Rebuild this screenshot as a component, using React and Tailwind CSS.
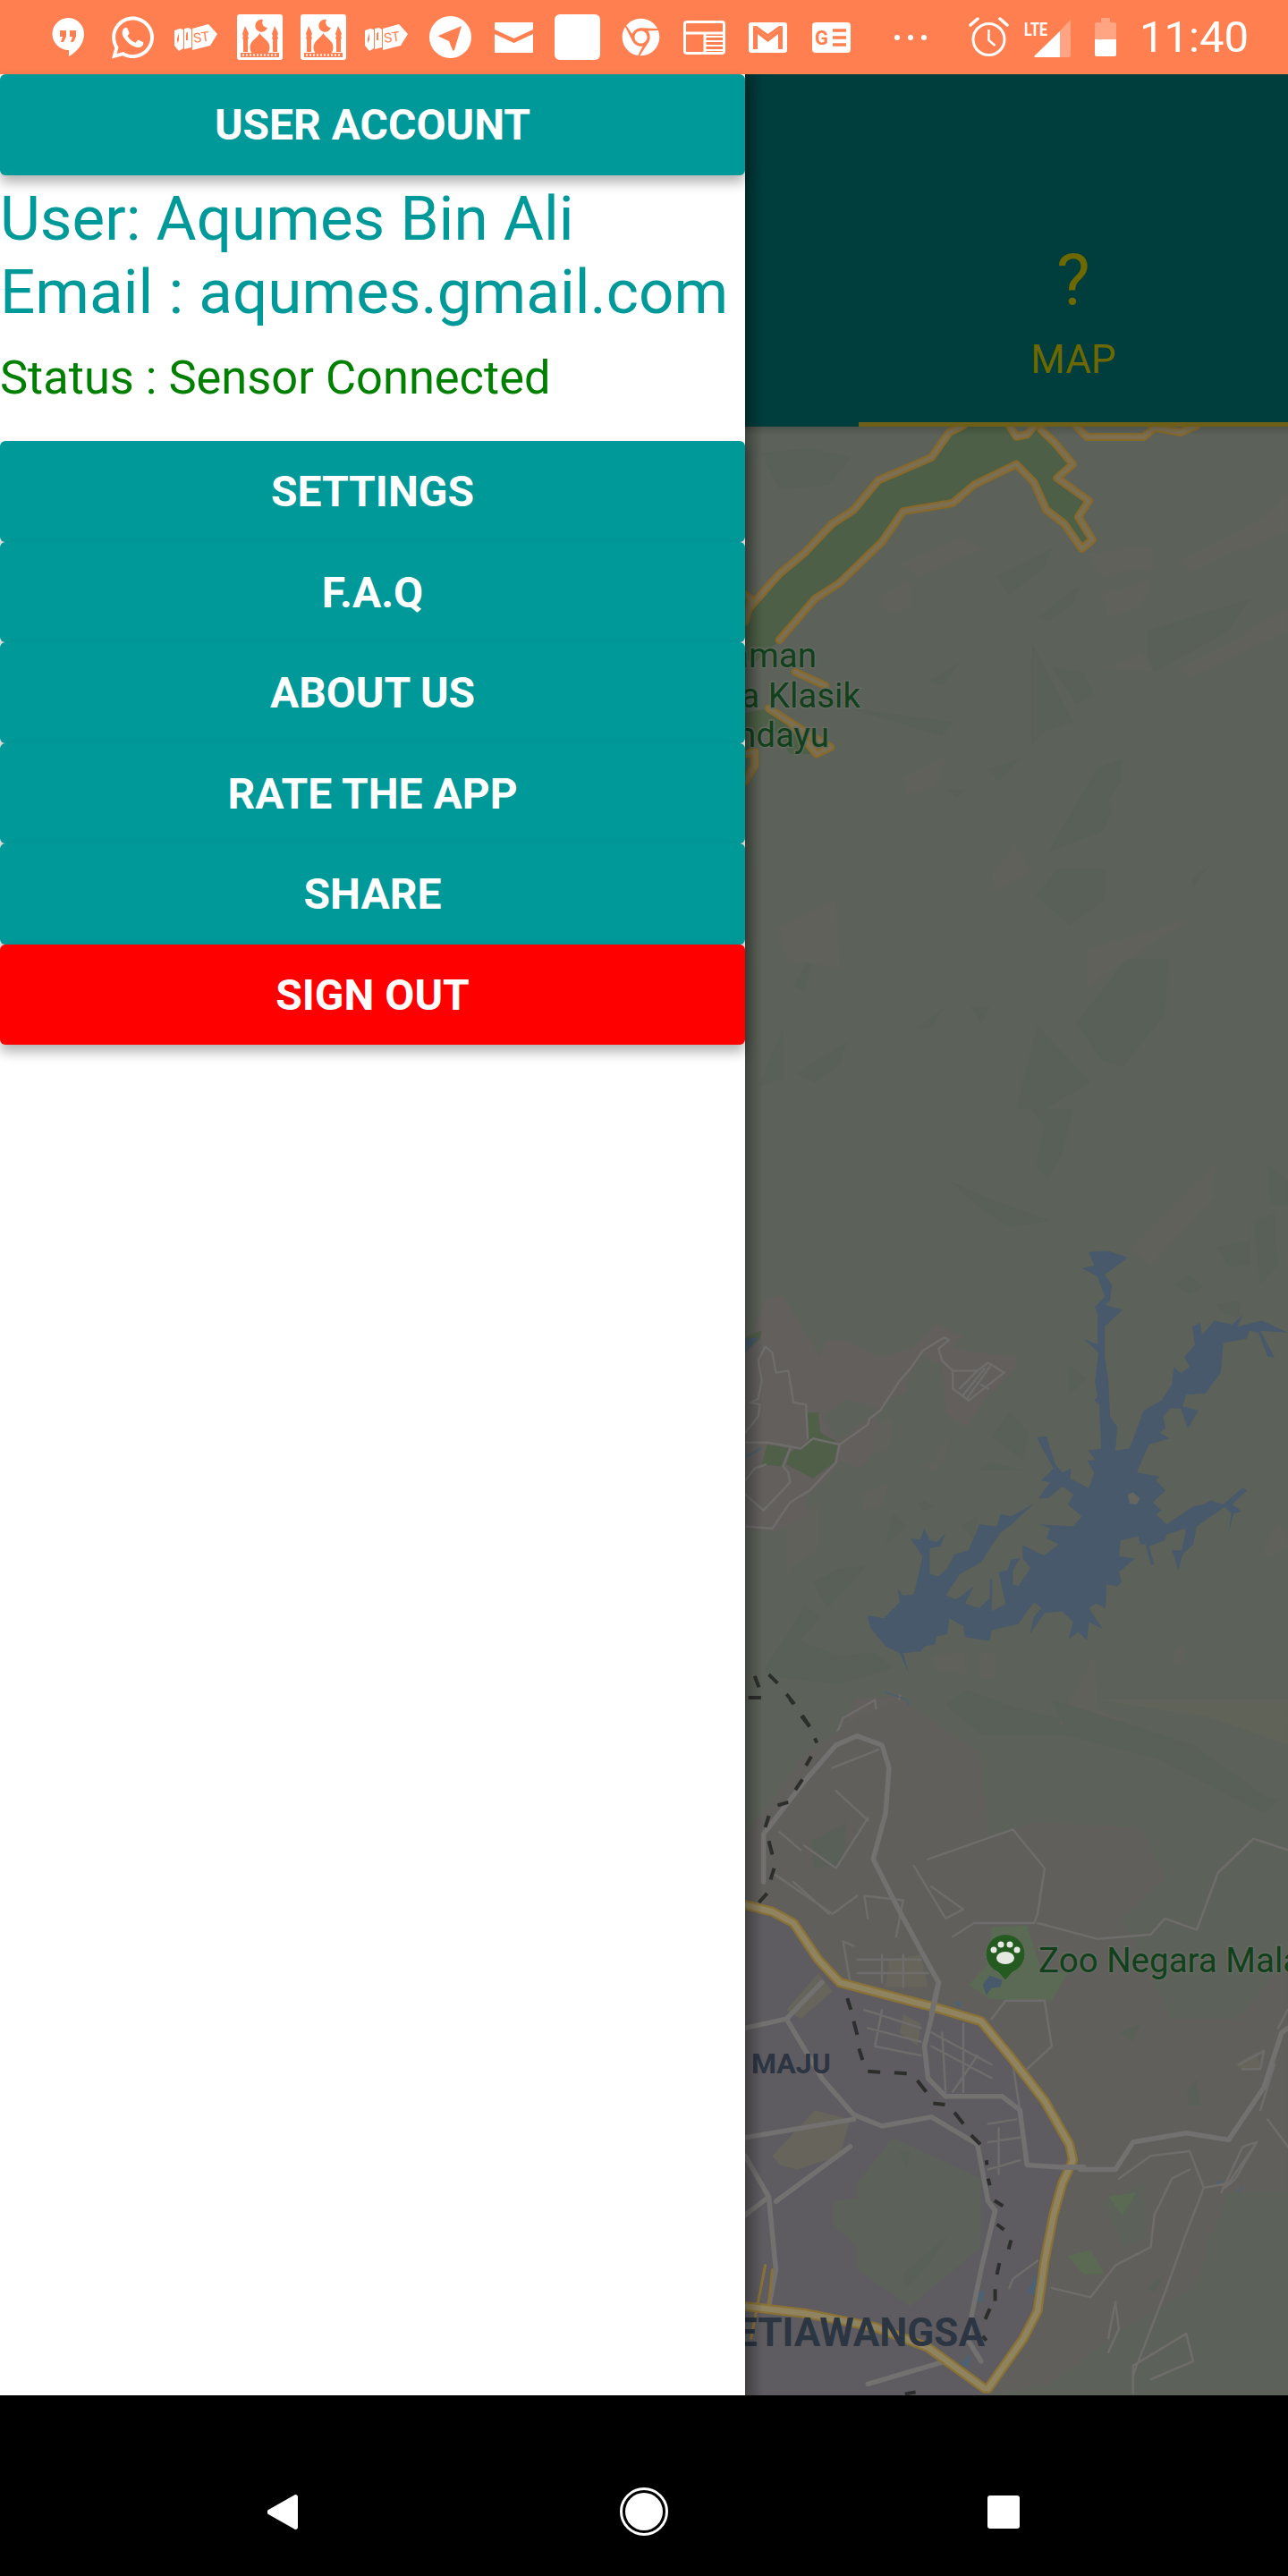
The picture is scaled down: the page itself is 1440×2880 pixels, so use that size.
import React from "react";
import { FaWhatsapp, FaChrome } from "react-icons/fa";

const CORAL = "#FF7F50";

function Hangouts() {
  return (
    <svg width="36" height="43" viewBox="0 0 36 43" className="shrink-0">
      <path d="M18 0a18 18 0 0 1 18 18c0 11-8 20-17 25v-7A18 18 0 0 1 18 0z" fill="#fff" />
      <path d="M9 14h7v7l-3 6h-3l2-6H9zM20 14h7v7l-3 6h-3l2-6h-3z" fill={CORAL} />
    </svg>
  );
}

function FirstTag({ className }) {
  return (
    <svg width="48" height="30" viewBox="0 0 48 30" className={className}>
      <path d="M0 7l6-2 4 1v21l-5 3-5-6z" fill="#fff" />
      <path d="M11 5l5-1 3 2v20l-8 2z" fill="#fff" />
      <path d="M20 5L38 0l10 11-8 13-20 5z" fill="#fff" />
      <path d="M5 10v8l-2 3v-5zM14 9l-1 2v7h2V9z" fill={CORAL} />
      <text x="22" y="21" fontSize="15" fontFamily="Roboto, sans-serif" fill={CORAL} transform="rotate(-8 22 21)">
        ST
      </text>
    </svg>
  );
}

function Mosque({ className }) {
  return (
    <svg width="51" height="51" viewBox="0 0 51 51" className={className}>
      <rect width="51" height="51" rx="3" fill="#fff" />
      <path d="M9 13l3 6 1 3-1 2 1 3-1 1v14H7V28l-1-1 1-3-1-2 1-3zM42 13l3 6 1 3-1 2 1 3-1 1v14h-5V28l-1-1 1-3-1-2 1-3z" fill={CORAL} />
      <path d="M25.5 21c2 5 11 8 11 16 0 3-1 5-2 6H16.5c-1-1-2-3-2-6 0-8 9-11 11-16z" fill={CORAL} />
      <path d="M29 6a7 7 0 1 0 5 9 6 6 0 0 1-5-9z" fill={CORAL} />
      <rect x="4" y="43" width="43" height="5" fill={CORAL} />
      <path d="M6 45.500h40" stroke="#fff" strokeWidth="2" strokeDasharray="2 2" />
    </svg>
  );
}

function Telegram() {
  return (
    <svg width="47" height="47" viewBox="0 0 47 47" className="shrink-0">
      <circle cx="23.500" cy="23.500" r="23.500" fill="#fff" />
      <path d="M10 22L36 11 28 38c-1 1-2 1-2 0l-4-10-11-5c-1 0-1-1-1-1z" fill={CORAL} />
    </svg>
  );
}

function Mail() {
  return (
    <svg width="43" height="34" viewBox="0 0 43 34" className="shrink-0">
      <path d="M1 0h41a1 1 0 0 1 1 1v7L21.500 18 0 8V1a1 1 0 0 1 1-1z" fill="#fff" />
      <path d="M0 13l21.500 10L43 13v20a1 1 0 0 1-1 1H1a1 1 0 0 1-1-1z" fill="#fff" />
    </svg>
  );
}

function News() {
  return (
    <svg width="47" height="38" viewBox="0 0 47 38" className="shrink-0">
      <rect x="1.500" y="1.500" width="44" height="35" rx="2.500" fill="none" stroke="#fff" strokeWidth="3" />
      <path d="M2 14h43" stroke="#fff" strokeWidth="3" />
      <path d="M24 14v22" stroke="#fff" strokeWidth="3" />
      <path d="M25 18h20M25 23h20M25 28h20M25 33h20" stroke="#fff" strokeWidth="2" />
    </svg>
  );
}

function Gmail() {
  return (
    <svg width="43" height="34" viewBox="0 0 43 34" className="shrink-0">
      <rect width="43" height="34" rx="3" fill="#fff" />
      <path d="M5 4v26h5V13l11.500 9L33 13v17h5V4l-16.500 13z" fill={CORAL} />
      <path d="M5 4h4l12.500 9L34 4h4v0L21.500 17z" fill={CORAL} />
    </svg>
  );
}

function GoogleNews() {
  return (
    <svg width="43" height="34" viewBox="0 0 43 34" className="shrink-0">
      <rect width="43" height="34" rx="4" fill="#fff" />
      <text x="3" y="25" fontSize="22" fontWeight="700" fontFamily="Roboto, sans-serif" fill={CORAL}>
        G
      </text>
      <path d="M23 9h15M23 17h15M23 25h15" stroke={CORAL} strokeWidth="3.500" />
    </svg>
  );
}

function Alarm() {
  return (
    <svg width="45" height="45" viewBox="0 0 45 45" className="shrink-0">
      <circle cx="22.500" cy="25" r="17.500" fill="none" stroke="#fff" strokeWidth="3" />
      <path d="M22.500 14v12l7 6" fill="none" stroke="#fff" strokeWidth="2.500" />
      <path d="M10 2L2 9M35 2l8 7" stroke="#fff" strokeWidth="3.500" strokeLinecap="round" />
    </svg>
  );
}

function Signal() {
  return (
    <svg width="52" height="44" viewBox="0 0 52 44" className="shrink-0">
      <text x="0" y="20" fontSize="20" fontWeight="700" fontFamily="Roboto, sans-serif" fill="#fff" textLength="26" lengthAdjust="spacingAndGlyphs">
        LTE
      </text>
      <path d="M52 2v40a2 2 0 0 1-2 2H12z" fill="#fff" fillOpacity="0.3" />
      <path d="M40 15v29H13a1 1 0 0 1-1-2z" fill="#fff" />
    </svg>
  );
}

function Battery() {
  return (
    <svg width="24" height="43" viewBox="0 0 24 43" className="shrink-0">
      <path d="M7 0h10v5h5a2 2 0 0 1 2 2v17H0V7a2 2 0 0 1 2-2h5z" fill="#fff" fillOpacity="0.3" />
      <path d="M0 24h24v17a2 2 0 0 1-2 2H2a2 2 0 0 1-2-2z" fill="#fff" />
    </svg>
  );
}

function StatusBar() {
  return (
    <div className="h-[83px] shrink-0 flex items-center bg-[#FF7F50] text-white pl-[58px]">
      <Hangouts />
      <FaWhatsapp className="ml-[31px] shrink-0 w-[47px] h-[54px]" />
      <FirstTag className="ml-[23px] shrink-0" />
      <Mosque className="ml-[22px] shrink-0" />
      <Mosque className="ml-[20px] shrink-0" />
      <FirstTag className="ml-[21px] shrink-0" />
      <div className="ml-[24px] shrink-0">
        <Telegram />
      </div>
      <div className="ml-[26px] shrink-0">
        <Mail />
      </div>
      <div className="ml-[24px] w-[51px] h-[51px] shrink-0 rounded-[6px] bg-white"></div>
      <FaChrome className="ml-[24px] shrink-0 w-[43px] h-[43px]" />
      <div className="ml-[26px] shrink-0">
        <News />
      </div>
      <div className="ml-[26px] shrink-0">
        <Gmail />
      </div>
      <div className="ml-[28px] shrink-0">
        <GoogleNews />
      </div>
      <div className="ml-[49px] w-[36px] shrink-0 flex justify-between">
        <div className="w-[6px] h-[6px] rounded-full bg-white"></div>
        <div className="w-[6px] h-[6px] rounded-full bg-white"></div>
        <div className="w-[6px] h-[6px] rounded-full bg-white"></div>
      </div>
      <div className="ml-[47px] shrink-0">
        <Alarm />
      </div>
      <div className="ml-[17px] shrink-0">
        <Signal />
      </div>
      <div className="ml-[27px] shrink-0">
        <Battery />
      </div>
      <p className="ml-[26px] text-[49px] leading-none">11:40</p>
    </div>
  );
}

function DrawerButton({ label, color = "bg-[#009999]", height = "h-[112.5px]", className = "pt-[2px]" }) {
  return (
    <div
      className={`${height} ${color} ${className} relative flex items-center justify-center rounded-[6px] text-white text-[48px] font-bold shadow-[0_8px_14px_rgba(0,0,0,0.3)]`}
    >
      {label}
    </div>
  );
}

function Drawer() {
  return (
    <div className="w-[833px] shrink-0 bg-white relative z-10">
      <DrawerButton label="USER ACCOUNT" height="h-[113px]" className="pt-0" />
      <p className="mt-[8px] text-[69.2px] leading-[82px] text-[#009999] whitespace-nowrap">User: Aqumes Bin Ali</p>
      <p className="text-[69.2px] leading-[82px] text-[#009999] whitespace-nowrap">Email : aqumes.gmail.com</p>
      <p className="mt-[25px] text-[52.4px] leading-[59px] text-[#008000] whitespace-nowrap">Status : Sensor Connected</p>
      <div className="mt-[41px]">
        <DrawerButton label="SETTINGS" />
        <DrawerButton label="F.A.Q" />
        <DrawerButton label="ABOUT US" />
        <DrawerButton label="RATE THE APP" />
        <DrawerButton label="SHARE" />
        <DrawerButton label="SIGN OUT" color="bg-[#FF0000]" />
      </div>
    </div>
  );
}

// vector-effect does not inherit, so it has to sit on the path itself
function Road({ d, color = "#6e6d6b", width = 2, cap = "round" }) {
  return (
    <path
      d={d}
      fill="none"
      stroke={color}
      strokeWidth={width}
      strokeLinejoin="round"
      strokeLinecap={cap}
      vectorEffect="non-scaling-stroke"
    />
  );
}

function MapTop() {
  const ribbon =
    "M33 480L130 395 200 350 280 285 340 255 410 190 560 140 610 85 650 70 780 70 800 95 830 90 850 72 870 80 905 105 960 155 915 185 1005 235 975 270 1015 320 985 340 935 285 885 255 850 195 800 155 680 200 620 240 480 258 420 325 300 415 230 450 130 540 60 590 33 580z";
  const edges =
    "M33 480L130 395 200 350 280 285 340 255 410 190 560 140 610 85 650 70M780 70L800 95 830 90 850 72M870 80L905 105 960 155 915 185 1005 235 975 270 1015 320 985 340 935 285 885 255 850 195 800 155 680 200 620 240 480 258 420 325 300 415 230 450 130 540M970 72L1000 95 1080 95 1160 95 1190 75 1265 85 1310 70M33 440L50 450 33 500M33 790L60 785 60 815 33 850M175 610L260 640M100 690L210 745 275 775 235 790 160 720";
  return (
    <g transform="translate(820 440) scale(.3954 .5102)">
      <g fill="#596057">
        <path d="M80 130L220 120 330 140 270 200 130 210zM745 400L900 340 880 380 780 440zM860 490L980 420 960 460 890 500zM1170 520L1460 450 1400 520 1190 610 1170 570zM845 550L880 600 960 720 880 740 845 770zM900 600L990 610 1020 660 970 680zM1030 820L1100 800 1095 850 1060 890 1070 920 1040 960 890 1005zM855 1100L920 1040 1050 1040 1050 1110 950 1165zM970 1380L1110 1240 1230 1240 1220 1360 1100 1475 1040 1460zM860 1385L1010 1510 880 1568 800 1568zM180 1490L320 1420 300 1470 230 1510zM170 1300L245 1190 200 1310zM70 1520L140 1390 140 1500zM520 1390L595 1345 560 1390zM670 1345L725 1345 700 1380zM550 630L640 590 590 640zM330 690L620 720 590 750zM600 865L660 870 630 885zM720 825L810 800 750 850zM1300 1060L1350 1030 1300 1080z" />
      </g>
      <g fill="#60615a">
        <path d="M470 370L640 320 700 340 520 400zM420 440L500 410 500 470 430 480zM1040 440L1180 410 1150 470 1060 490zM1000 350L1180 335 1190 380 1040 400zM1270 360L1500 270 1568 220 1568 300 1290 390zM480 840L610 790 570 860 490 880zM730 1050L800 990 840 1050 740 1090zM130 1170L290 1110 300 1260 150 1240zM1000 1220L1290 1150 1000 1300zM1060 600L1150 570 1190 610zM1270 600L1460 520 1568 470 1568 520 1290 620z" />
      </g>
      <path d="M33 700L100 690 210 745 230 790 160 790 100 720 60 760 33 800z" fill="#4d5f46" />
      <path d={ribbon} fill="#4d5f46" />
      <Road d={edges} color="#87692b" width={9} />
      <Road d={edges} color="#7c6f52" width={4.5} />
    </g>
  );
}

function MapLake() {
  const lake =
    "M1005 358L1060 355 1115 372 1050 415 1070 440 1065 480 1050 490 1100 503 1050 545 1050 620 1060 680 1065 770 1085 795 1080 855 1120 850 1160 755 1210 730 1240 690 1245 645 1265 662 1290 645 1275 620 1305 590 1297 545 1320 535 1325 565 1360 530 1410 540 1440 515 1425 545 1495 530 1568 560 1490 555 1530 622 1510 620 1485 560 1460 555 1450 575 1385 585 1378 660 1335 712 1280 715 1270 745 1315 755 1305 770 1285 800 1265 750 1235 750 1215 770 1222 800 1205 810 1232 825 1175 840 1140 910 1205 920 1195 930 1222 955 1185 985 1210 1005 1195 1015 1225 1040 1300 995 1330 990 1350 980 1385 990 1440 948 1452 955 1410 990 1438 1008 1415 1012 1400 1062 1408 1012 1388 997 1310 1045 1300 1090 1270 1115 1258 1155 1240 1105 1268 1105 1280 1050 1225 1065 1220 1080 1175 1095 1190 1140 1180 1140 1165 1090 1150 1090 1145 1070 1095 1080 1090 1120 1135 1125 1090 1160 1098 1185 1085 1195 1055 1190 1052 1250 1025 1238 1005 1250 1045 1302 1005 1285 1000 1330 975 1310 948 1328 960 1285 930 1258 880 1262 838 1315 850 1270 872 1250 850 1235 805 1290 730 1305 725 1332 655 1322 650 1295 610 1275 605 1315 575 1320 570 1340 540 1345 530 1358 480 1362 495 1412 470 1362 430 1345 388 1300 378 1268 425 1275 470 1235 465 1200 480 1218 510 1215 535 1120 500 1075 528 1078 540 1050 555 1080 575 1085 600 1062 585 1095 555 1100 555 1165 580 1170 605 1150 625 1115 665 1105 695 1040 745 1045 755 1015 785 1020 850 988 780 1045 755 1060 700 1135 640 1165 600 1218 630 1228 680 1195 655 1238 695 1250 725 1225 725 1175 732 1180 730 1258 770 1240 750 1160 775 1155 785 1128 810 1125 790 1155 790 1190 805 1195 840 1150 818 1125 818 1092 878 1118 920 1090 885 1075 895 1050 865 1040 960 1045 985 1020 945 990 962 965 930 945 890 975 862 975 895 935 870 930 905 900 880 860 858 822 885 820 910 890 930 910 955 900 952 925 1005 950 1020 910 1000 880 1025 880 1002 855 1040 850 1035 740 1020 730 1030 720 1022 685 1032 610 990 575 1030 590 1030 515 1022 495 1050 470 1030 420 985 398 1020 392z";
  return (
    <g transform="translate(820 1240) scale(.3954 .4464)">
      <g fill="#596057">
        <path d="M840 0L960 0 930 110 890 175 855 140 880 40zM610 180L740 230 900 280 780 295 700 250zM1510 140L1568 180 1568 240 1520 240zM1470 280L1530 260 1540 390 1490 440zM1370 345L1460 330 1460 390 1400 395zM1245 440L1290 415 1330 445 1290 465zM1365 490L1430 480 1430 520 1390 515zM945 640L1000 675 950 715zM730 820L780 760 835 810 820 880zM690 905L730 885 820 905zM520 990L540 980 565 995 540 1005zM430 1090L450 1010 490 1045zM645 1045L690 1020 680 1075zM225 1185L300 1150 375 1145 265 1250zM150 1320L200 1245 250 1270 175 1340zM90 1400L150 1320 300 1370 400 1360 450 1400 300 1440 100 1420zM600 1490L660 1455 800 1500 1100 1568 700 1568z" />
      </g>
      <g fill="#60615a">
        <path d="M1120 350L1360 140 1360 220 1180 390zM360 970L440 935 420 990 370 1005zM570 880L605 815 600 880zM385 790L450 775 440 850 390 870zM530 890L580 890 570 910zM700 1360L740 1360 740 1430 695 1420zM920 1540L1020 1370 1030 1500 1100 1530 1000 1568zM560 1370L650 1360 660 1420 570 1400zM1240 1360L1270 1340 1280 1380 1250 1390zM1500 1100L1540 1040 1568 1070 1568 1100 1510 1120zM150 1040L240 990 240 1100 150 1160z" />
      </g>
      <path d="M33 1050V600L95 470H140L245 620 260 580 310 575 410 620 500 600 570 540 650 565 620 600 800 620 800 650 700 740 660 795 600 760 590 640 530 620 490 680 490 710 450 720 410 750 390 870 360 900 300 880 270 920 200 975 220 1020 110 1060z" fill="#625f5d" />
      <path d="M290 1568L350 1475 470 1470 600 1568z" fill="#625f5d" />
      <path d="M250 770L320 730 410 750 385 770 300 830z" fill="#5c6259" />
      <path d="M210 760L240 760 245 810 295 835 210 830zM95 840L155 850 140 895 80 890zM160 860L215 830 295 840 285 885 225 925 150 890z" fill="#505f48" />
      <path d="M33 570L80 555 75 575 33 610z" fill="#505f48" />
      <path d="M33 575L72 572 33 610z" fill="#47596a" />
      <path d={lake} fill="#47596a" />
      <path d="M1115 965L1130 960 1150 975 1140 990 1120 988z" fill="#666660" />
      <Road
        width={2.5}
        d="M610 578L595 572 535 605 500 650 470 680 415 755 385 775 380 790 300 840 290 885 215 955 160 985 110 1050 33 1045M300 840L225 825 190 850 100 835 33 835M210 825L205 740 170 735 155 655 120 660 110 610 90 595 70 630 80 680 70 725 50 735 75 740 70 770 33 810M160 850L140 895 155 910 160 935 85 1005 33 965M90 890L60 900 33 930M610 578L580 600 590 630 620 655 690 655 720 635 765 660 665 730 620 700 620 655M690 655L640 700M710 650L650 715M725 645L660 725M700 690L720 700M290 1568L310 1525 400 1480 405 1515 440 1530 465 1500 470 1470M350 1568L370 1520 420 1530 440 1568"
      />
      <Road d="M430 1460L490 1480 505 1520 500 1568" color="#49606f" width={1.5} />
      <Road d="M33 870L60 860 75 850" color="#49606f" width={2} />
      <Road
        d="M60 1420L72 1448M100 1416L125 1438M42 1474H78M150 1465L172 1490M192 1520L215 1545"
        color="#2c2e2c"
        width={4}
        cap="butt"
      />
    </g>
  );
}

function MapBottom() {
  const thin =
    "M550 350L790 285 880 370 860 470 850 490 680 490 620 520M860 490L1030 525 1180 515 1220 480 1310 505 1370 380 1470 305 1568 330M730 700L770 660 880 660 900 760 830 810M1090 1050L1180 1000 1290 990 1330 1070 1280 1170 1220 1300 1130 1480M900 1290L1010 1310 1080 1240 1180 1200 1190 1130 1240 1050 1290 1030M1330 1070L1400 1060 1480 970M510 365L600 480 650 460 560 410M380 480L370 430 480 440 460 520M340 540L310 530 330 620M350 570H530M350 600H550M420 560V620M480 560V630M370 680L530 720M380 720L530 750M400 760L530 780M420 680L400 760M560 730L730 800M560 760L730 830M590 730L600 860M650 710V860M690 780L620 860M720 930L800 920M720 970L810 960M720 1030L810 1010M750 940V1040M790 800L810 900M110 380L280 470 350 430M130 290L190 330M170 400L270 470M200 320L290 370 380 260M280 150L410 110M290 200L380 265M860 1230L790 1270 780 1290M1510 920L1568 980M1380 1080L1440 980 1480 970 1420 1050 1390 1070M1180 1490L1300 1450 1280 1390 1130 1460 1130 1520M1060 1430L1090 1380 1080 1320 1060 1400M1530 800L1490 900M1430 800L1500 770 1490 810 1440 810M1568 680L1540 720";
  const highway =
    "M33 450L110 465 170 490 240 570 300 620 470 655 570 675 700 705 780 780 880 880 950 975 960 1010 930 1060 905 1130 880 1230 860 1340 820 1400 720 1510M33 1330L200 1345 400 1375 550 1420 710 1510";
  return (
    <g transform="translate(820 1900) scale(.3954 .5102)">
      <path d="M470 0L700 120 720 300 850 270 1150 280 1220 390 1100 480 1240 700 1430 700 1568 560V1080L1400 1080 1300 1290 1100 1380 900 1500 720 1525 700 700 300 620 33 450V300L200 120 350 40z" fill="#615f5c" />
      <path d="M33 450L170 490 300 620 700 705 950 975 880 1230 820 1400 720 1525H33z" fill="#5e5c60" />
      <g fill="#5c6259">
        <path d="M350 1060L450 960 700 1050 700 1200 500 1330 350 1250zM280 1100L380 1090 350 1200 280 1150zM1050 1100L1160 1060 1170 1180 1100 1200zM1330 1200L1420 1070 1440 1170 1360 1300z" />
      </g>
      <g fill="#596057">
        <path d="M480 1260L610 1170 560 1230 490 1290zM1280 860L1310 830 1320 890 1290 890zM1090 730L1150 710 1130 750zM470 990L500 990 490 1030zM1170 1290L1220 1260 1190 1300zM220 310L320 270 310 360 230 370zM900 0L1300 100 1500 210 1540 220 1500 250 1200 130 950 80z" />
      </g>
      <path d="M1020 0L1350 40 1568 100V0z" fill="#5f6358" />
      <path d="M665 625L720 580 730 500 830 495 870 590 945 600 900 660 780 660 720 655z" fill="#5b6a54" />
      <path d="M945 1220L1010 1205 1050 1260 990 1260zM1060 1090L1140 1080 1100 1130z" fill="#5a6a53" />
      <path d="M110 1000L230 900 330 920 300 1000 180 1030 130 1020zM150 680L240 600 280 640 190 700zM1420 800L1480 770 1490 810 1440 815zM440 570L530 560 550 630 430 630zM480 690L530 710 520 760 470 730z" fill="#67645b" />
      <path d="M705 625L725 605 760 615 755 630 730 632 715 648z" fill="#47596a" />
      <path d="M830 1300L860 1255 855 1305zM620 660L645 665 640 675zM1425 1078L1445 1065 1430 1080zM690 1300L710 1295 705 1320 690 1320zM640 1455L670 1435 665 1465zM1365 1060L1390 1050 1370 1065z" fill="#4c6274" />
      <Road d={thin} width={2.5} />
      <Road
        color="#727170"
        width={5.5}
        d="M85 295L200 180 290 100 350 80 420 100 440 150 430 250 395 350 460 450 530 550 580 620 565 680 540 760 550 830 600 870 760 870 810 900 830 1020 930 1025M33 720L150 700 250 620M150 700L250 830 340 910 420 935 560 915 690 975 720 1100 740 1120 700 1250 660 1400 700 1450M33 960L340 920M120 1100L330 980M100 1090L120 1250 100 1330M33 1000L100 1090M33 1130L100 1090M980 1030H1080L1130 970 1280 950 1400 965 1500 850 1550 730 1568 720M85 295V400M380 1500L600 1450"
      />
      <Road d="M90 1240L50 1400M110 1250L100 1330" color="#8a7236" width={3} />
      <Road d={highway} color="#8a7236" width={11} />
      <Road d={highway} color="#8f8360" width={6.5} />
      <Road d="M580 620L560 690M930 1025H990" color="#727170" width={6} />
      <Road
        color="#2c2e2c"
        width={4}
        cap="butt"
        d="M160 0L170 10M195 35L215 60M230 85L236 95M220 125L205 145M195 175L175 198M155 225L125 232M100 255L90 280M100 310L110 340M115 370L105 395M95 425L72 445M322 655L332 680M340 705L350 735M355 765L365 790M380 815L415 817M455 818L490 820M520 835L545 860M565 885L598 888M625 905L650 930M672 955L698 975M715 1010L717 1020M720 1050L725 1065M738 1098L762 1110M745 1150L765 1162M785 1185L778 1205M752 1235L745 1260M740 1292V1318M725 1335L712 1358M705 1395L715 1405M485 1522L515 1518"
      />
    </g>
  );
}

function MapView() {
  return (
    <div className="flex-1 relative overflow-hidden bg-[#5c6259]">
      <svg width="607" height="2201" viewBox="833 477 607 2201" className="block">
        <MapTop />
        <MapLake />
        <MapBottom />
        <g fontFamily="Roboto, sans-serif" fontSize="38.500" fill="#12401c" stroke="#646a60" strokeWidth="3" paintOrder="stroke">
          <text x="913" y="746" textAnchor="end">aman</text>
          <text x="962" y="791" textAnchor="end">a Klasik</text>
          <text x="927" y="835" textAnchor="end">ndayu</text>
          <text x="1161" y="2205">Zoo Negara Mala</text>
        </g>
        <path d="M1124 2214l-8-9a22 22 0 1 1 16 0z" fill="#255a20" stroke="#646a60" strokeWidth="1" />
        <g fill="#e6e8e2">
          <ellipse cx="1124" cy="2189" rx="10" ry="7" />
          <circle cx="1111" cy="2180" r="3.500" />
          <circle cx="1119" cy="2174" r="3.500" />
          <circle cx="1129" cy="2174" r="3.500" />
          <circle cx="1137" cy="2180" r="3.500" />
        </g>
        <g fontFamily="Roboto, sans-serif" fontWeight="700" fill="#2c3542">
          <text x="840" y="2318" fontSize="32">MAJU</text>
          <text x="1101" y="2623" fontSize="44" textAnchor="end">ETIAWANGSA</text>
        </g>
      </svg>
      <div className="absolute top-0 left-0 right-0 h-[10px] bg-gradient-to-b from-black/15 to-transparent"></div>
      <div className="absolute top-0 bottom-0 left-0 w-[20px] bg-gradient-to-r from-black/30 to-transparent"></div>
    </div>
  );
}

function TabBar() {
  return (
    <div className="h-[394px] shrink-0 relative flex justify-end bg-[#003d3d]">
      <div className="w-[480px] flex flex-col items-center border-b-[5px] border-[#6d5f18] text-[#6d6800]">
        <p className="mt-[191px] text-[80px] leading-[80px]">?</p>
        <p className="mt-[26px] text-[44px] leading-[44px]">MAP</p>
      </div>
      <div className="absolute top-0 bottom-0 left-0 w-[20px] bg-gradient-to-r from-black/30 to-transparent"></div>
    </div>
  );
}

function NavBar() {
  return (
    <div className="h-[202px] shrink-0 flex items-center bg-black pt-[58px]">
      <svg width="34" height="39" viewBox="0 0 34 39" className="ml-[299px] shrink-0">
        <path d="M31 0a3 3 0 0 1 3 2v35a3 3 0 0 1-3 2L1 22a3 3 0 0 1 0-5z" fill="#fff" />
      </svg>
      <svg width="54" height="54" viewBox="0 0 54 54" className="ml-[360px] shrink-0">
        <circle cx="27" cy="27" r="25.500" fill="none" stroke="#fff" strokeWidth="3" />
        <circle cx="27" cy="27" r="21" fill="#fff" />
      </svg>
      <div className="ml-[357px] w-[36px] h-[37px] shrink-0 rounded-[3px] bg-white"></div>
    </div>
  );
}

function App() {
  return (
    <div className="w-[1440px] h-[2880px] flex flex-col overflow-hidden bg-white [font-family:Roboto,sans-serif]">
      <StatusBar />
      <div className="flex-1 flex min-h-0">
        <Drawer />
        <div className="flex-1 flex flex-col min-w-0">
          <TabBar />
          <MapView />
        </div>
      </div>
      <NavBar />
    </div>
  );
}

export default App;
